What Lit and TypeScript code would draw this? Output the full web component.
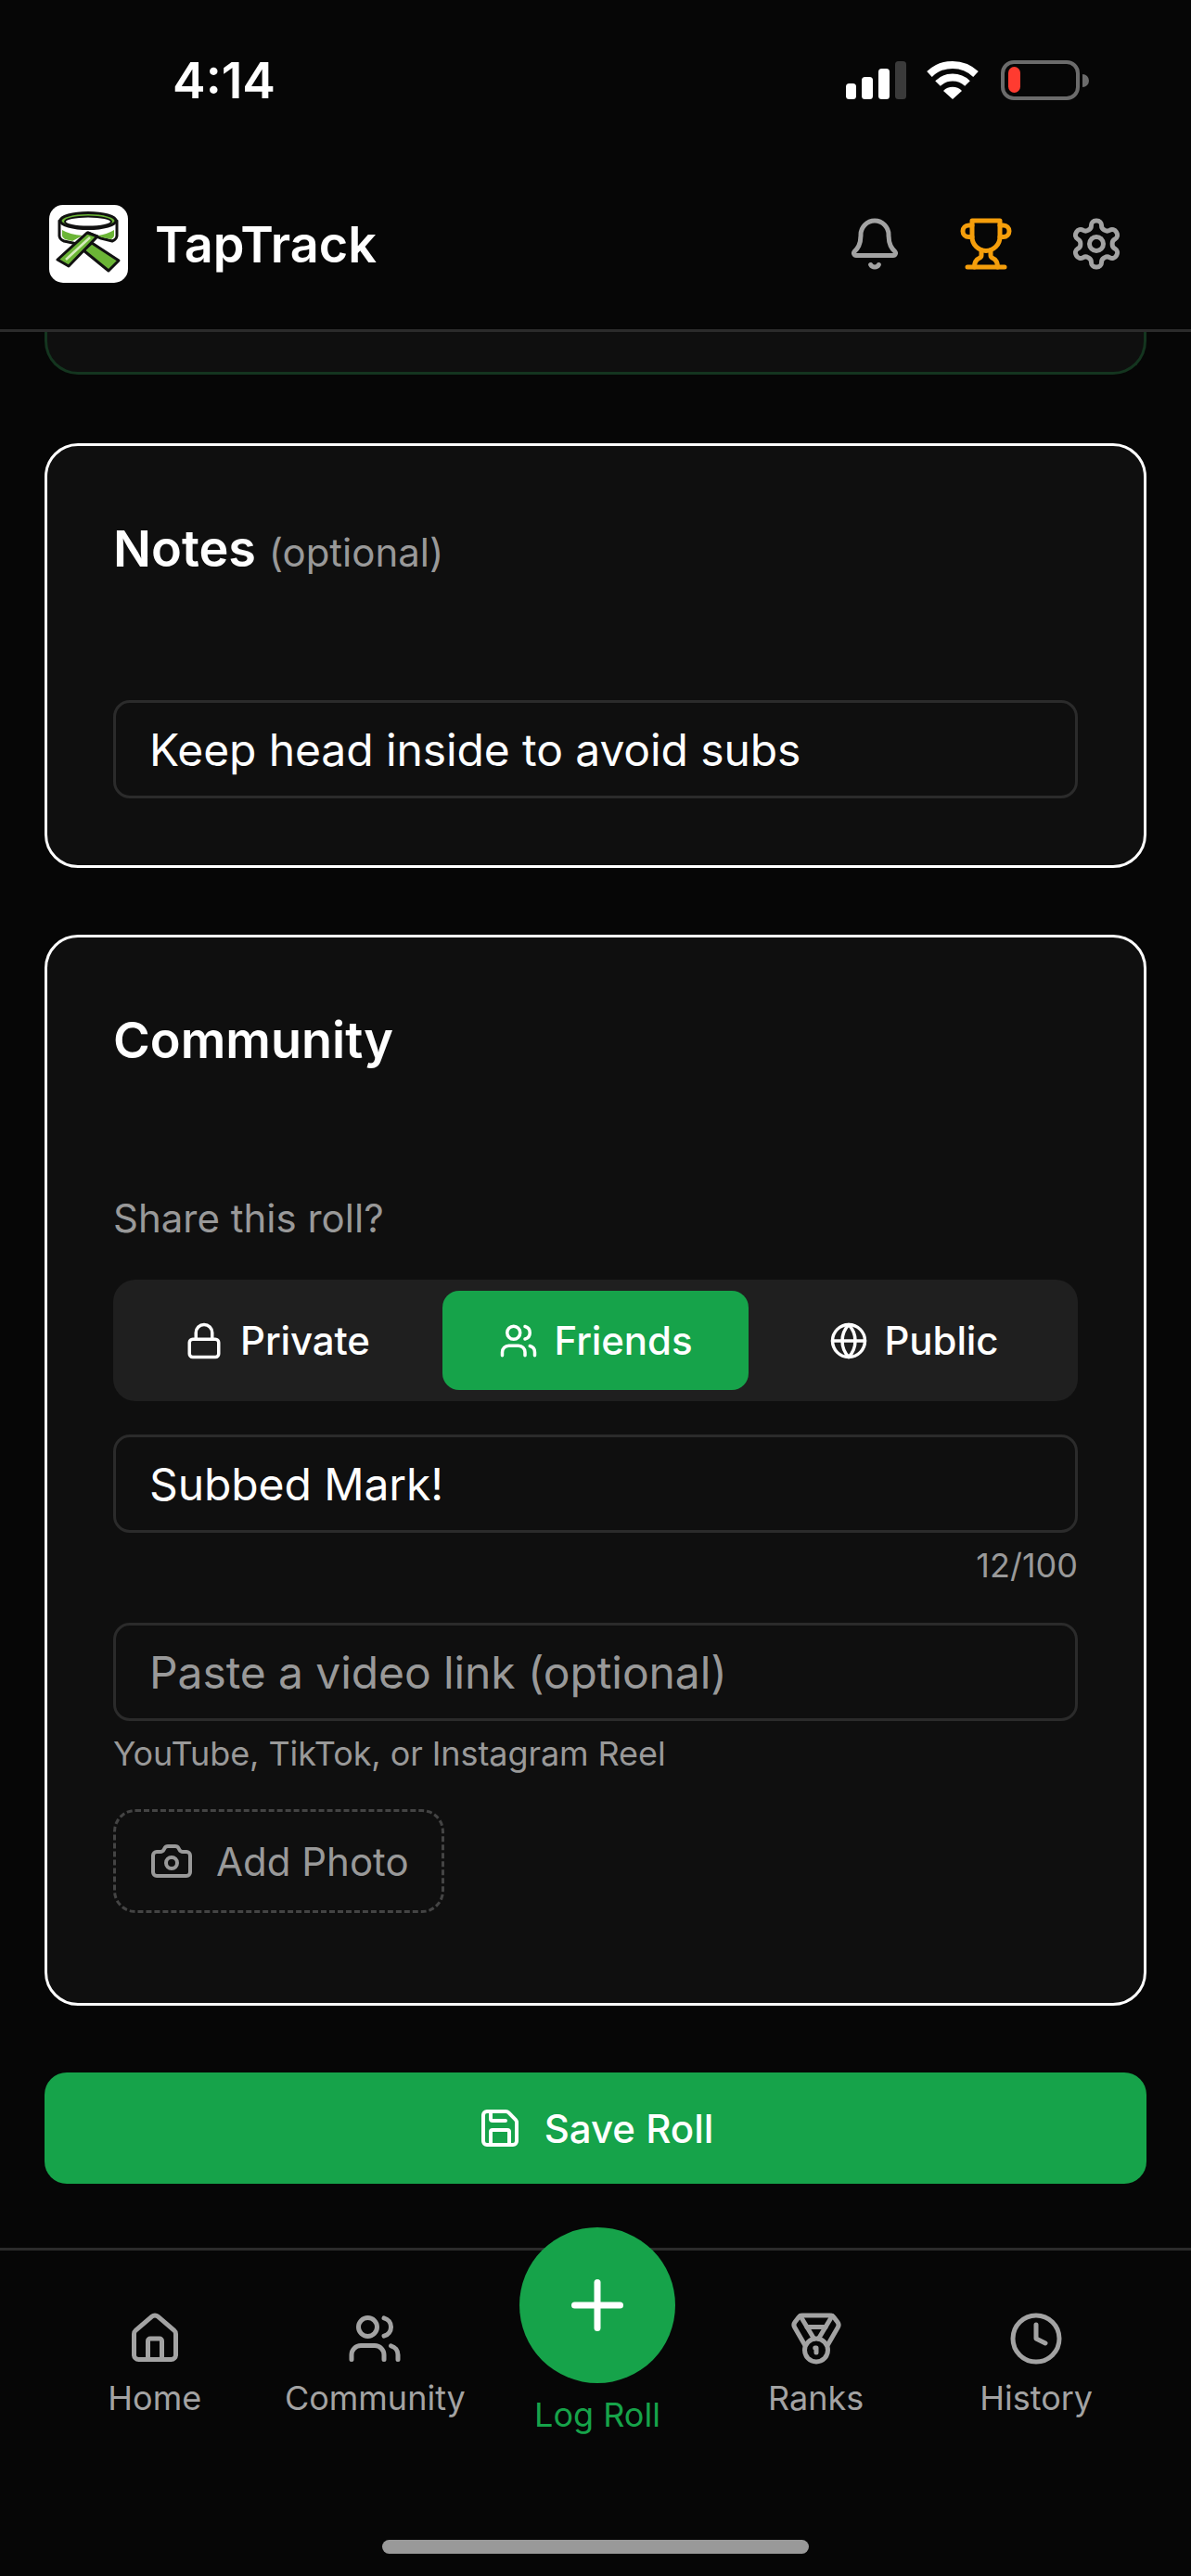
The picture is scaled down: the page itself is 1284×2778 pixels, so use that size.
import { LitElement, html, css, svg } from 'lit';
import { customElement } from 'lit/decorators.js';

const icons = {
  bell: svg`<path d="M10.268 21a2 2 0 0 0 3.464 0"/><path d="M3.262 15.326A1 1 0 0 0 4 17h16a1 1 0 0 0 .74-1.673C19.41 13.956 18 12.499 18 8A6 6 0 0 0 6 8c0 4.499-1.411 5.956-2.738 7.326"/>`,
  trophy: svg`<path d="M6 9H4.5a2.5 2.5 0 0 1 0-5H6"/><path d="M18 9h1.5a2.5 2.5 0 0 0 0-5H18"/><path d="M4 22h16"/><path d="M10 14.66V17c0 .55-.47.98-.97 1.21C7.85 18.75 7 20.24 7 22"/><path d="M14 14.66V17c0 .55.47.98.97 1.21C16.15 18.75 17 20.24 17 22"/><path d="M18 2H6v7a6 6 0 0 0 12 0V2Z"/>`,
  settings: svg`<path d="M12.22 2h-.44a2 2 0 0 0-2 2v.18a2 2 0 0 1-1 1.73l-.43.25a2 2 0 0 1-2 0l-.15-.08a2 2 0 0 0-2.73.73l-.22.38a2 2 0 0 0 .73 2.73l.15.1a2 2 0 0 1 1 1.72v.51a2 2 0 0 1-1 1.74l-.15.09a2 2 0 0 0-.73 2.73l.22.38a2 2 0 0 0 2.73.73l.15-.08a2 2 0 0 1 2 0l.43.25a2 2 0 0 1 1 1.73V20a2 2 0 0 0 2 2h.44a2 2 0 0 0 2-2v-.18a2 2 0 0 1 1-1.73l.43-.25a2 2 0 0 1 2 0l.15.08a2 2 0 0 0 2.73-.73l.22-.39a2 2 0 0 0-.73-2.73l-.15-.08a2 2 0 0 1-1-1.74v-.5a2 2 0 0 1 1-1.74l.15-.09a2 2 0 0 0 .73-2.73l-.22-.38a2 2 0 0 0-2.73-.73l-.15.08a2 2 0 0 1-2 0l-.43-.25a2 2 0 0 1-1-1.73V4a2 2 0 0 0-2-2z"/><circle cx="12" cy="12" r="3"/>`,
  lock: svg`<rect x="3" y="11" width="18" height="11" rx="2"/><path d="M7 11V7a5 5 0 0 1 10 0v4"/>`,
  users: svg`<path d="M16 21v-2a4 4 0 0 0-4-4H6a4 4 0 0 0-4 4v2"/><circle cx="9" cy="7" r="4"/><path d="M22 21v-2a4 4 0 0 0-3-3.87"/><path d="M16 3.13a4 4 0 0 1 0 7.75"/>`,
  globe: svg`<circle cx="12" cy="12" r="10"/><path d="M12 2a14.5 14.5 0 0 0 0 20 14.5 14.5 0 0 0 0-20"/><path d="M2 12h20"/>`,
  save: svg`<path d="M15.2 3a2 2 0 0 1 1.4.6l3.8 3.8a2 2 0 0 1 .6 1.4V19a2 2 0 0 1-2 2H5a2 2 0 0 1-2-2V5a2 2 0 0 1 2-2z"/><path d="M17 21v-7a1 1 0 0 0-1-1H8a1 1 0 0 0-1 1v7"/><path d="M7 3v4a1 1 0 0 0 1 1h7"/>`,
  camera: svg`<path d="M13.997 4a2 2 0 0 1 1.76 1.05l.486.9A2 2 0 0 0 18.003 7H20a2 2 0 0 1 2 2v9a2 2 0 0 1-2 2H4a2 2 0 0 1-2-2V9a2 2 0 0 1 2-2h1.997a2 2 0 0 0 1.759-1.048l.489-.904A2 2 0 0 1 10.004 4z"/><circle cx="12" cy="13" r="3"/>`,
  plus: svg`<path d="M5 12h14"/><path d="M12 5v14"/>`,
  house: svg`<path d="M15 21v-8a1 1 0 0 0-1-1h-4a1 1 0 0 0-1 1v8"/><path d="M3 10a2 2 0 0 1 .709-1.528l7-5.999a2 2 0 0 1 2.582 0l7 5.999A2 2 0 0 1 21 10v9a2 2 0 0 1-2 2H5a2 2 0 0 1-2-2z"/>`,
  medal: svg`<path d="M7.21 15 2.66 7.14a2 2 0 0 1 .13-2.2L4.4 2.8A2 2 0 0 1 6 2h12a2 2 0 0 1 1.6.8l1.6 2.14a2 2 0 0 1 .14 2.2L16.79 15"/><path d="M11 12 5.12 2.2"/><path d="m13 12 5.88-9.8"/><path d="M8 7h8"/><circle cx="12" cy="17" r="5"/><path d="M12 18v-2h-.5"/>`,
  clock: svg`<circle cx="12" cy="12" r="10"/><polyline points="12 6 12 12 16 14"/>`,
};

const icon = (name: keyof typeof icons, size: number) => html`
  <svg width=${size} height=${size} viewBox="0 0 24 24" fill="none" stroke="currentColor"
    stroke-width="2" stroke-linecap="round" stroke-linejoin="round">${icons[name]}</svg>
`;

@customElement('app-root')
export class AppRoot extends LitElement {
    static styles = css`
    :host {
      display: block;
      width: 1284px;
      height: 2778px;
      background: #060606;
      color: #fff;
      font-family: Inter, "Noto Sans", sans-serif;
      overflow: hidden;
    }

    * {
      box-sizing: border-box;
    }

    svg {
      display: block;
      flex: none;
    }

    .page {
      display: flex;
      flex-direction: column;
      height: 100%;
    }

    .status {
      height: 170px;
      display: flex;
      justify-content: space-between;
      align-items: flex-start;
      padding: 55px 110px 0 186px;
    }

    .time {
      font-size: 53.5px;
      line-height: 64px;
      font-weight: 600;
    }

    .status-icons {
      margin-top: 10px;
    }

    .header {
      height: 188px;
      display: flex;
      align-items: center;
      padding: 0 72px 0 53px;
      border-bottom: 3px solid #2b2b2b;
    }

    .brand {
      font-size: 54px;
      line-height: 66px;
      padding-top: 2px;
      font-weight: 600;
      margin-left: 29px;
      flex: 1;
    }

    .actions {
      display: flex;
      gap: 59.5px;
      color: #a3a3a3;
    }

    .trophy {
      color: #f59e0b;
    }

    .main {
      flex: 1;
      padding: 0 48px;
      display: flex;
      flex-direction: column;
      gap: 74px;
      min-height: 0;
    }

    .clipped {
      height: 46px;
      background: #0f0f0f;
      border: 3px solid #14351f;
      border-top: 0;
      border-radius: 0 0 36px 36px;
    }

    .card {
      background: #0f0f0f;
      border: 3px solid #fff;
      border-radius: 36px;
      padding: 72px 71px;
    }

    .card-title {
      font-size: 54px;
      line-height: 78px;
      font-weight: 600;
    }

    .card-title span {
      font-size: 42px;
      line-height: 1;
      font-weight: 400;
      color: #999;
    }

    .notes-title {
      margin-bottom: 124px;
    }

    .community-title {
      margin-bottom: 126px;
    }

    .community {
      margin-top: -2px;
      padding-bottom: 97px;
    }

    .label {
      font-size: 42px;
      line-height: 54px;
      color: #999;
      margin-bottom: 39px;
    }

    .field {
      display: block;
      width: 100%;
      height: 106px;
      background: transparent;
      border: 3px solid #2b2b2b;
      border-radius: 18px;
      padding: 0 36px;
      color: #fff;
      font: 400 48px Inter, "Noto Sans", sans-serif;
      letter-spacing: -0.1px;
      outline: none;
    }

    .field::placeholder {
      color: #999;
      opacity: 1;
    }

    .segments {
      display: grid;
      grid-template-columns: repeat(3, 1fr);
      gap: 13px;
      height: 131px;
      padding: 12px;
      background: #1f1f1f;
      border-radius: 24px;
      margin-bottom: 36px;
    }

    .segment {
      display: flex;
      align-items: center;
      justify-content: center;
      gap: 18px;
      border-radius: 18px;
      font-size: 42px;
      font-weight: 500;
      letter-spacing: -0.1px;
    }

    .segment.on {
      background: #16a34a;
    }

    .count {
      font-size: 36px;
      line-height: 48px;
      color: #999;
      text-align: right;
      margin: 11px 0 38px;
    }

    .hint {
      font-size: 36px;
      line-height: 48px;
      color: #999;
      letter-spacing: -0.08px;
      margin: 11px 0 36px;
    }

    .add-photo {
      display: flex;
      align-items: center;
      gap: 24px;
      width: 357px;
      height: 112px;
      padding: 0 36px;
      border: 3px dashed #444;
      border-radius: 24px;
      color: #999;
      font-size: 42px;
      white-space: nowrap;
    }

    .save {
      height: 120px;
      display: flex;
      align-items: center;
      justify-content: center;
      gap: 24px;
      background: #16a34a;
      border-radius: 24px;
      font-size: 42px;
      font-weight: 500;
      margin-top: -2px;
    }

    .nav {
      height: 354px;
      border-top: 3px solid #2b2b2b;
      padding: 0 48px;
      display: flex;
      flex-direction: column;
      align-items: center;
    }

    .tabs {
      display: grid;
      grid-template-columns: repeat(5, 1fr);
      width: 100%;
    }

    .tab {
      display: flex;
      flex-direction: column;
      align-items: center;
      padding-top: 65px;
      color: #a3a3a3;
      font-size: 36px;
      line-height: 48px;
      gap: 10px;
    }

    .tab.log {
      color: #16a34a;
      padding: 0 0 0 4px;
      gap: 10px;
    }

    .fab {
      width: 168px;
      height: 168px;
      margin-top: -25px;
      border-radius: 50%;
      background: #16a34a;
      color: #fff;
      display: flex;
      align-items: center;
      justify-content: center;
    }

    .home-bar {
      width: 460px;
      height: 15px;
      border-radius: 8px;
      background: #999;
      margin-top: auto;
      margin-bottom: 24px;
    }
  `;

    private renderStatusIcons() {
      return html`
        <svg class="status-icons" width="262" height="44" viewBox="0 0 262 44">
          <rect x="0" y="25" width="11" height="17" rx="3.5" fill="#fff"/>
          <rect x="17" y="18" width="12" height="24" rx="3.5" fill="#fff"/>
          <rect x="35" y="9" width="12" height="33" rx="3.5" fill="#fff"/>
          <rect x="53" y="1" width="12" height="41" rx="3.5" fill="#3a3a3a"/>
          <path d="M90 15 a36 36 0 0 1 50 0" fill="none" stroke="#fff" stroke-width="8" />
          <path d="M99 25 a23 23 0 0 1 32 0" fill="none" stroke="#fff" stroke-width="8" />
          <path d="M105 33 a14 14 0 0 1 20 0 L115 42 Z" fill="#fff"/>
          <rect x="169" y="2" width="81" height="39" rx="12" fill="none" stroke="#6b6b6b" stroke-width="4"/>
          <rect x="175" y="7" width="13" height="28" rx="6.5" fill="#ff3b30"/>
          <path d="M255 15 a7 7 0 0 1 0 14 Z" fill="#6b6b6b"/>
        </svg>
      `;
    }

    // belt knot logo
    private renderLogo() {
      return html`
        <svg width="85" height="84" viewBox="0 0 85 84">
          <rect width="85" height="84" rx="15" fill="#fff"/>
          <path d="M11 17 V33 Q11 37 16 39 L30 42 L42 30 L56 36 L68 39 Q73 37 73 33 V17 Z" fill="#fff" stroke="#111" stroke-width="3" stroke-linejoin="round"/>
          <path d="M14 27 Q22 32 36 33 L25 39 L17 37 Q14 35 14 33 Z" fill="#6bb536"/>
          <path d="M52 33 Q62 32 70 27 V33 Q70 35 67 37 L57 35 Z" fill="#6bb536"/>
          <ellipse cx="42" cy="17" rx="30" ry="8.5" fill="#6bb536" stroke="#111" stroke-width="3"/>
          <ellipse cx="42" cy="18" rx="25" ry="5.5" fill="#fff" stroke="#111" stroke-width="2"/>
          <path d="M46 41 L75 60 L64 71 L37 49 Z" fill="#6bb536" stroke="#111" stroke-width="3" stroke-linejoin="round"/>
          <path d="M41 30 L52 34 L21 66 L9 59 Z" fill="#6bb536" stroke="#111" stroke-width="3" stroke-linejoin="round"/>
          <path d="M44 35 L18 59" stroke="#d6ecbd" stroke-width="2.5" fill="none"/>
        </svg>
      `;
    }

    private renderTab(name: keyof typeof icons, label: string) {
      return html`<div class="tab">${icon(name, 60)}<span>${label}</span></div>`;
    }

    render() {
      return html`
        <div class="page">
          <div class="status">
            <div class="time">4:14</div>
            ${this.renderStatusIcons()}
          </div>
          <header class="header">
            ${this.renderLogo()}
            <div class="brand">TapTrack</div>
            <div class="actions">
              ${icon('bell', 60)}
              <span class="trophy">${icon('trophy', 60)}</span>
              ${icon('settings', 60)}
            </div>
          </header>

          <main class="main">
            <div class="clipped"></div>

            <section class="card">
              <div class="card-title notes-title">Notes <span>(optional)</span></div>
              <input class="field" .value=${'Keep head inside to avoid subs'} />
            </section>

            <section class="card community">
              <div class="card-title community-title">Community</div>
              <div class="label">Share this roll?</div>
              <div class="segments">
                <div class="segment">${icon('lock', 42)}Private</div>
                <div class="segment on">${icon('users', 42)}Friends</div>
                <div class="segment">${icon('globe', 42)}Public</div>
              </div>
              <input class="field" .value=${'Subbed Mark!'} />
              <div class="count">12/100</div>
              <input class="field" placeholder="Paste a video link (optional)" />
              <div class="hint">YouTube, TikTok, or Instagram Reel</div>
              <div class="add-photo">${icon('camera', 48)}Add Photo</div>
            </section>

            <div class="save">${icon('save', 48)}Save Roll</div>
          </main>

          <nav class="nav">
            <div class="tabs">
              ${this.renderTab('house', 'Home')}
              ${this.renderTab('users', 'Community')}
              <div class="tab log">
                <div class="fab">${icon('plus', 84)}</div>
                <span>Log Roll</span>
              </div>
              ${this.renderTab('medal', 'Ranks')}
              ${this.renderTab('clock', 'History')}
            </div>
            <div class="home-bar"></div>
          </nav>
        </div>
      `;
    }
}
